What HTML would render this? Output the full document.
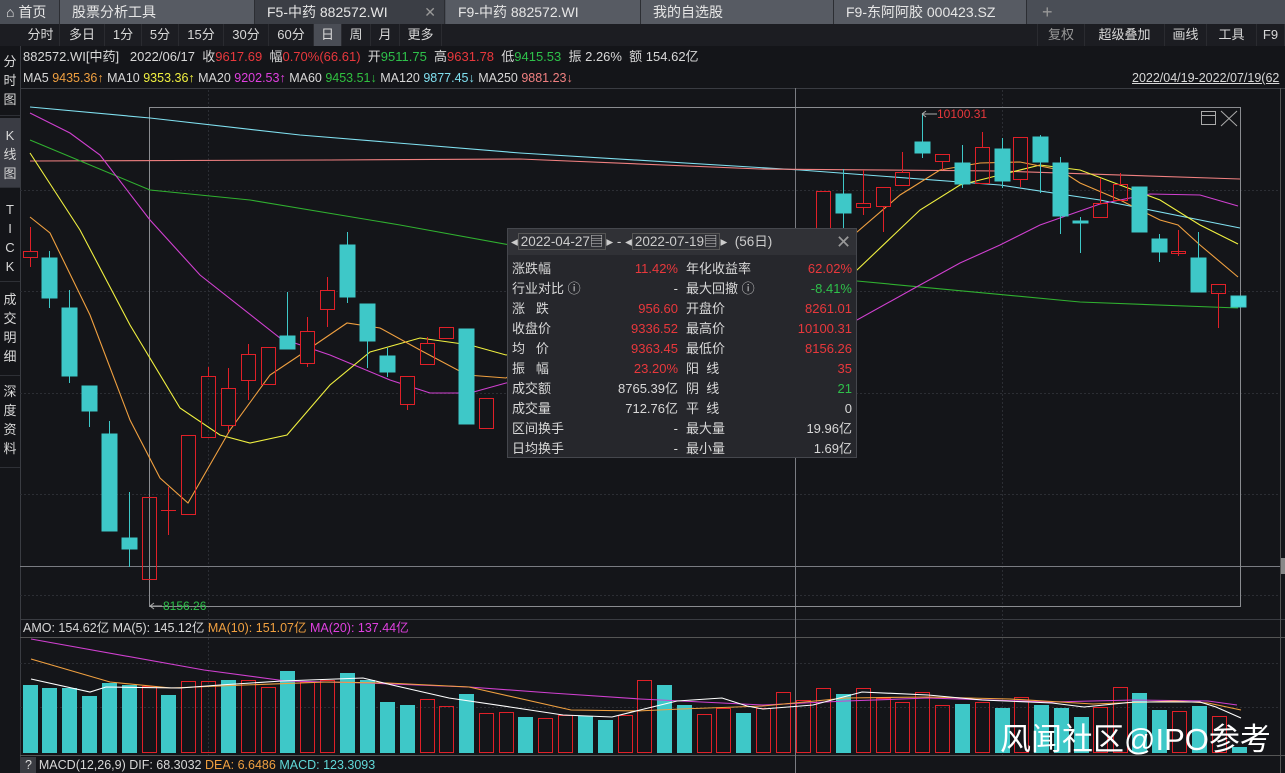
<!DOCTYPE html>
<html><head><meta charset="utf-8">
<style>
*{margin:0;padding:0;box-sizing:border-box}
body{width:1285px;height:773px;background:#141519;overflow:hidden;position:relative;font-family:"Liberation Sans","Noto Sans CJK SC",sans-serif;font-size:13px;color:#d8d8d8}
.abs{position:absolute;white-space:nowrap}
.tabs{position:absolute;left:0;top:0;width:1285px;height:24px;background:#4a4e56}
.tab{position:absolute;top:0;height:24px;line-height:24px;font-size:14px;color:#e6e6e6;padding-left:12px;border-right:1px solid #2c2e33}
.row2{position:absolute;left:0;top:24px;width:1285px;height:22px;background:#1c1d22}
.b{position:absolute;top:24px;height:22px;line-height:22px;font-size:13px;color:#d8d8d8;text-align:center;border-right:1px solid #2a2b30}
.side{position:absolute;left:0;width:20px;font-size:13px;color:#d8d8d8;text-align:center;line-height:19px;border-bottom:1px solid #2e3036}
.r{color:#e8383c}.g{color:#2ec04a}.pop{position:absolute;left:507px;top:228px;width:350px;height:230px;background:#26272c;border:1px solid #45474d}
.pr{position:absolute;height:20px;line-height:20px;font-size:13px}
</style></head><body>
<div class="tabs">
<div class="tab" style="left:0;width:60px;background:#4a4e56;padding-left:6px">⌂ 首页</div>
<div class="tab" style="left:60px;width:195px;background:#575b63">股票分析工具</div>
<div class="tab" style="left:255px;width:190px;background:#3b3e45">F5-中药 882572.WI<span style="position:absolute;right:8px;color:#999">✕</span></div>
<div class="tab" style="left:446px;width:195px;background:#575b63">F9-中药 882572.WI</div>
<div class="tab" style="left:641px;width:193px;background:#575b63">我的自选股</div>
<div class="tab" style="left:834px;width:193px;background:#575b63">F9-东阿阿胶 000423.SZ</div>
<div class="tab" style="left:1030px;width:30px;color:#999;border:none;font-size:18px">+</div>
</div>
<div class="row2"></div>
<div class="b" style="left:22px;width:38px">分时</div><div class="b" style="left:60px;width:45px">多日</div><div class="b" style="left:105px;width:37px">1分</div><div class="b" style="left:142px;width:37px">5分</div><div class="b" style="left:179px;width:45px">15分</div><div class="b" style="left:224px;width:45px">30分</div><div class="b" style="left:269px;width:45px">60分</div><div class="b" style="left:314px;width:28px;background:#4a4d55">日</div><div class="b" style="left:342px;width:29px">周</div><div class="b" style="left:371px;width:29px">月</div><div class="b" style="left:400px;width:42px">更多</div>
<div class="b" style="left:1037px;width:48px;color:#999;border-left:1px solid #2a2b30">复权</div><div class="b" style="left:1085px;width:80px">超级叠加</div><div class="b" style="left:1165px;width:42px">画线</div><div class="b" style="left:1207px;width:50px">工具</div><div class="b" style="left:1257px;width:28px">F9</div>
<div class="side" style="top:46px;height:70px;padding-top:6px">分<br>时<br>图</div>
<div class="side" style="top:118px;height:70px;padding-top:8px;background:#3a3c44">K<br>线<br>图</div>
<div class="side" style="top:192px;height:90px;padding-top:8px">T<br>I<br>C<br>K</div>
<div class="side" style="top:284px;height:92px;padding-top:6px">成<br>交<br>明<br>细</div>
<div class="side" style="top:376px;height:92px;padding-top:6px">深<br>度<br>资<br>料</div>
<div class="abs" style="left:23px;top:48px;line-height:18px">882572.WI[中药]&nbsp;&nbsp; 2022/06/17&nbsp; 收<span class="r">9617.69</span>&nbsp; 幅<span class="r">0.70%(66.61)</span>&nbsp; 开<span class="g">9511.75</span>&nbsp; 高<span class="r">9631.78</span>&nbsp; 低<span class="g">9415.53</span>&nbsp; 振 2.26%&nbsp; 额 154.62亿</div>
<div class="abs" style="left:23px;top:69px;line-height:18px;font-size:12.5px">MA5 <span style="color:#f0a040">9435.36↑</span> MA10 <span style="color:#f0f040">9353.36↑</span> MA20 <span style="color:#e040e0">9202.53↑</span> MA60 <span style="color:#30c040">9453.51↓</span> MA120 <span style="color:#80e0f0">9877.45↓</span> MA250 <span style="color:#f08080">9881.23↓</span></div>
<div class="abs" style="left:1132px;top:69px;line-height:18px;font-size:12.5px;text-decoration:underline">2022/04/19-2022/07/19(62</div>
<svg class="abs" style="left:0;top:0" width="1285" height="773">
<g stroke="#3a3c42" stroke-width="1">
<line x1="20" y1="88.5" x2="1285" y2="88.5"/><line x1="20.5" y1="46" x2="20.5" y2="773"/>
<line x1="20" y1="619.5" x2="1285" y2="619.5"/><line x1="20" y1="637.5" x2="1285" y2="637.5" stroke="#555"/>
<line x1="20" y1="755.5" x2="1285" y2="755.5" stroke="#555"/>
<line x1="1280.5" y1="88" x2="1280.5" y2="773" stroke="#555"/>
</g>
<g stroke="#2c2e34" stroke-dasharray="2,2">
<line x1="20" y1="190.5" x2="1280" y2="190.5"/><line x1="20" y1="291.5" x2="1280" y2="291.5"/><line x1="20" y1="393.5" x2="1280" y2="393.5"/><line x1="20" y1="494.5" x2="1280" y2="494.5"/><line x1="20" y1="595.5" x2="1280" y2="595.5"/>
<line x1="208.5" y1="90" x2="208.5" y2="755"/><line x1="1002.5" y1="90" x2="1002.5" y2="755"/>
<line x1="20" y1="663.5" x2="1280" y2="663.5"/><line x1="20" y1="707.5" x2="1280" y2="707.5"/>
</g>
<g stroke="#7a7c82"><line x1="795.5" y1="88" x2="795.5" y2="773"/><line x1="20" y1="566.5" x2="1280" y2="566.5"/></g>
<rect x="149.5" y="107.5" width="1091" height="499" fill="none" stroke="#8a8c90"/>
<rect x="1201.5" y="111.5" width="14" height="13" fill="none" stroke="#aaa"/><line x1="1202" y1="115.5" x2="1215" y2="115.5" stroke="#aaa"/>
<path d="M1221 111L1237 126M1237 111L1221 126" stroke="#aaa"/>
<rect x="1281" y="558" width="4" height="16" fill="#888"/>
<g fill="none" stroke-width="1.1">
<polyline stroke="#80e0f0" points="30,107 150,118 300,135 520,153 800,170 1000,185 1100,200 1240,228"/>
<polyline stroke="#f08080" points="30,161 330,160 520,159 760,169 1000,171 1240,179"/>
<polyline stroke="#30b030" points="30,140 150,190 250,200 400,225 510,245 857,281 1080,302 1238,308"/>
<polyline stroke="#d040d0" points="30,113 70,133 100,155 150,220 200,275 280,338 330,355 390,380 430,393 470,393 506,383 600,370 700,350 800,330 857,320 920,285 960,263 1000,245 1040,225 1100,204 1150,194 1200,195 1238,206"/>
<polyline stroke="#f0f040" points="30,153 80,230 130,325 180,408 220,435 250,443 287,435 330,385 370,352 420,338 470,345 506,355 600,340 700,310 800,285 857,270 920,210 960,185 1000,175 1040,165 1080,170 1120,185 1160,200 1200,225 1238,244"/>
<polyline stroke="#f0a040" points="30,217 50,233 90,315 130,420 160,478 188,503 230,430 270,375 300,355 347,323 380,328 420,350 467,375 506,378 600,320 700,280 800,250 857,232 900,195 940,170 980,163 1020,162 1060,170 1080,183 1120,200 1160,220 1178,225 1200,245 1238,277"/>
</g>
<g stroke="#3ec8c8" fill="#3ec8c8">
<line x1="49.5" y1="251" x2="49.5" y2="308"/><rect x="42" y="258" width="15" height="40"/>
<line x1="69.5" y1="290" x2="69.5" y2="383"/><rect x="62" y="308" width="15" height="68"/>
<line x1="89.5" y1="386" x2="89.5" y2="427"/><rect x="82" y="386" width="15" height="25"/>
<line x1="109.5" y1="421" x2="109.5" y2="531"/><rect x="102" y="434" width="15" height="97"/>
<line x1="129.5" y1="492" x2="129.5" y2="567"/><rect x="122" y="538" width="15" height="11"/>
<line x1="287.5" y1="292" x2="287.5" y2="349"/><rect x="280" y="336" width="15" height="13"/>
<line x1="347.5" y1="232" x2="347.5" y2="303"/><rect x="340" y="245" width="15" height="52"/>
<line x1="367.5" y1="304" x2="367.5" y2="368"/><rect x="360" y="304" width="15" height="37"/>
<line x1="387.5" y1="348" x2="387.5" y2="377"/><rect x="380" y="356" width="15" height="16"/>
<rect x="459" y="329" width="15" height="95"/>
<line x1="843.5" y1="169" x2="843.5" y2="228"/><rect x="836" y="194" width="15" height="19"/>
<line x1="922.5" y1="113" x2="922.5" y2="158"/><rect x="915" y="142" width="15" height="11"/>
<line x1="962.5" y1="145" x2="962.5" y2="188"/><rect x="955" y="163" width="15" height="21"/>
<line x1="1002.5" y1="138" x2="1002.5" y2="188"/><rect x="995" y="149" width="15" height="32"/>
<line x1="1040.5" y1="135" x2="1040.5" y2="193"/><rect x="1033" y="137" width="15" height="25"/>
<line x1="1060.5" y1="157" x2="1060.5" y2="234"/><rect x="1053" y="163" width="15" height="53"/>
<line x1="1080.5" y1="217" x2="1080.5" y2="253"/><rect x="1073" y="221" width="15" height="2"/>
<rect x="1132" y="187" width="15" height="45"/>
<line x1="1159.5" y1="234" x2="1159.5" y2="262"/><rect x="1152" y="239" width="15" height="13"/>
<line x1="1198.5" y1="232" x2="1198.5" y2="292"/><rect x="1191" y="258" width="15" height="34"/>
<rect x="1231" y="296" width="15" height="11" fill="#48d8d8"/>
</g>
<g stroke="#e02028" fill="none">
<line x1="30.5" y1="227" x2="30.5" y2="267"/><rect x="23.5" y="251.5" width="14" height="6" fill="#141519"/>
<rect x="142.5" y="497.5" width="14" height="82"/>
<line x1="168.5" y1="487" x2="168.5" y2="535"/><line x1="161" y1="510.5" x2="176" y2="510.5"/>
<rect x="181.5" y="435.5" width="14" height="79"/>
<line x1="208.5" y1="367" x2="208.5" y2="376"/><rect x="201.5" y="376.5" width="14" height="61"/>
<line x1="228.5" y1="368" x2="228.5" y2="432"/><rect x="221.5" y="388.5" width="14" height="37" fill="#141519"/>
<line x1="248.5" y1="344" x2="248.5" y2="400"/><rect x="241.5" y="354.5" width="14" height="26" fill="#141519"/>
<rect x="261.5" y="347.5" width="14" height="37"/>
<line x1="307.5" y1="317" x2="307.5" y2="367"/><rect x="300.5" y="331.5" width="14" height="32" fill="#141519"/>
<line x1="327.5" y1="277" x2="327.5" y2="327"/><rect x="320.5" y="290.5" width="14" height="19" fill="#141519"/>
<line x1="407.5" y1="376" x2="407.5" y2="410"/><rect x="400.5" y="376.5" width="14" height="28" fill="#141519"/>
<line x1="427.5" y1="337" x2="427.5" y2="343"/><rect x="420.5" y="343.5" width="14" height="21"/>
<rect x="439.5" y="327.5" width="14" height="11"/>
<rect x="479.5" y="398.5" width="14" height="30"/>
<rect x="816.5" y="191.5" width="14" height="38"/>
<line x1="863.5" y1="170" x2="863.5" y2="215"/><rect x="856.5" y="203.5" width="14" height="4" fill="#141519"/>
<line x1="883.5" y1="187" x2="883.5" y2="232"/><rect x="876.5" y="187.5" width="14" height="19" fill="#141519"/>
<line x1="902.5" y1="152" x2="902.5" y2="172"/><rect x="895.5" y="172.5" width="14" height="13"/>
<line x1="942.5" y1="161" x2="942.5" y2="170"/><rect x="935.5" y="154.5" width="14" height="7"/>
<line x1="982.5" y1="132" x2="982.5" y2="147"/><rect x="975.5" y="147.5" width="14" height="36"/>
<line x1="1020.5" y1="179" x2="1020.5" y2="187"/><rect x="1013.5" y="137.5" width="14" height="42"/>
<line x1="1100.5" y1="178" x2="1100.5" y2="203"/><rect x="1093.5" y="203.5" width="14" height="14"/>
<line x1="1120.5" y1="173" x2="1120.5" y2="184"/><rect x="1113.5" y="184.5" width="14" height="16"/>
<line x1="1178.5" y1="230" x2="1178.5" y2="256"/><rect x="1171.5" y="251.5" width="14" height="2"/>
<line x1="1218.5" y1="293" x2="1218.5" y2="328"/><rect x="1211.5" y="284.5" width="14" height="9"/>
</g>
<path d="M150 606l4-3M150 606l4 3" stroke="#aaa"/><line x1="150" y1="606" x2="162" y2="606" stroke="#aaa"/>
<text x="163" y="610" fill="#2ec04a" font-size="12" font-family="Liberation Sans">8156.26</text>
<path d="M922 114l4-3M922 114l4 3M922 114H937" stroke="#aaa" fill="none"/>
<text x="937" y="118" fill="#e8383c" font-size="12" font-family="Liberation Sans">10100.31</text>
<g fill="#3ec8c8">
<rect x="23" y="685" width="15" height="68"/><rect x="42" y="688" width="15" height="65"/><rect x="62" y="688" width="15" height="65"/><rect x="82" y="696" width="15" height="57"/><rect x="102" y="683" width="15" height="70"/><rect x="122" y="685" width="15" height="68"/><rect x="161" y="695" width="15" height="58"/><rect x="221" y="680" width="15" height="73"/><rect x="280" y="671" width="15" height="82"/><rect x="340" y="673" width="15" height="80"/><rect x="360" y="680" width="15" height="73"/><rect x="380" y="702" width="15" height="51"/><rect x="400" y="705" width="15" height="48"/><rect x="459" y="694" width="15" height="59"/><rect x="518" y="717" width="15" height="36"/><rect x="578" y="716" width="15" height="37"/><rect x="598" y="720" width="15" height="33"/><rect x="657" y="685" width="15" height="68"/><rect x="677" y="705" width="15" height="48"/><rect x="736" y="713" width="15" height="40"/><rect x="836" y="694" width="15" height="59"/><rect x="955" y="704" width="15" height="49"/><rect x="995" y="708" width="15" height="45"/><rect x="1034" y="705" width="15" height="48"/><rect x="1054" y="708" width="15" height="45"/><rect x="1074" y="717" width="15" height="36"/><rect x="1132" y="693" width="15" height="60"/><rect x="1152" y="710" width="15" height="43"/><rect x="1192" y="706" width="15" height="47"/><rect x="1232" y="747" width="15" height="6"/>
</g>
<g fill="none" stroke="#e02028">
<rect x="142.5" y="686.5" width="14" height="66"/><rect x="181.5" y="681.5" width="14" height="71"/><rect x="201.5" y="681.5" width="14" height="71"/><rect x="241.5" y="680.5" width="14" height="72"/><rect x="261.5" y="687.5" width="14" height="65"/><rect x="300.5" y="682.5" width="14" height="70"/><rect x="320.5" y="680.5" width="14" height="72"/><rect x="420.5" y="699.5" width="14" height="53"/><rect x="439.5" y="706.5" width="14" height="46"/><rect x="479.5" y="713.5" width="14" height="39"/><rect x="499.5" y="712.5" width="14" height="40"/><rect x="538.5" y="718.5" width="14" height="34"/><rect x="558.5" y="715.5" width="14" height="37"/><rect x="618.5" y="715.5" width="14" height="37"/><rect x="637.5" y="680.5" width="14" height="72"/><rect x="697.5" y="714.5" width="14" height="38"/><rect x="716.5" y="708.5" width="14" height="44"/><rect x="756.5" y="708.5" width="14" height="44"/><rect x="776.5" y="692.5" width="14" height="60"/><rect x="796.5" y="700.5" width="14" height="52"/><rect x="816.5" y="688.5" width="14" height="64"/><rect x="856.5" y="688.5" width="14" height="64"/><rect x="876.5" y="698.5" width="14" height="54"/><rect x="895.5" y="702.5" width="14" height="50"/><rect x="915.5" y="692.5" width="14" height="60"/><rect x="935.5" y="705.5" width="14" height="47"/><rect x="975.5" y="702.5" width="14" height="50"/><rect x="1014.5" y="697.5" width="14" height="55"/><rect x="1093.5" y="707.5" width="14" height="45"/><rect x="1113.5" y="687.5" width="14" height="65"/><rect x="1172.5" y="711.5" width="14" height="41"/><rect x="1212.5" y="716.5" width="14" height="36"/>
</g>
<g fill="none" stroke-width="1.1">
<polyline stroke="#d040d0" points="31,639 204,670 286,681 367,683 469,687 551,693 640,699 763,705 846,701 928,698 1051,702 1134,700 1208,701 1237,705"/>
<polyline stroke="#f0a040" points="31,659 110,682 171,688 245,685 327,682 388,683 469,687 571,710 637,711 681,709 763,706 846,698 928,697 1010,699 1093,704 1175,701 1208,703 1241,710"/>
<polyline stroke="#ffffff" points="31,679 90,692 106,687 180,688 220,685 282,681 363,678 392,685 449,698 510,707 563,715 612,717 640,710 677,701 722,698 747,706 763,709 813,705 862,692 928,695 982,700 1052,703 1084,707 1134,702 1200,702 1216,707 1241,718"/>
</g>
<rect x="20" y="757" width="16" height="16" fill="#3a3c42"/>
</svg>
<div class="abs" style="left:23px;top:620px;line-height:17px;font-size:12.5px">AMO: 154.62亿 MA(5): 145.12亿 <span style="color:#f0a040">MA(10): 151.07亿</span> <span style="color:#e040e0">MA(20): 137.44亿</span></div>
<div class="abs" style="left:25px;top:757px;line-height:16px;font-size:12.5px">?&nbsp; MACD(12,26,9) DIF: 68.3032 <span style="color:#f0a040">DEA: 6.6486</span> <span style="color:#60d8d8">MACD: 123.3093</span></div>
<div class="pop">
<div style="position:absolute;left:0;top:0;width:348px;height:26px;background:#303136"></div>
<div class="abs" style="left:3px;top:4px;line-height:18px;font-size:13.5px;color:#ccc">◂<span style="border:1px solid #555;padding:0 2px">2022-04-27▤</span>▸ - ◂<span style="border:1px solid #555;padding:0 2px">2022-07-19▤</span>▸&nbsp; (56日)</div>
<div class="abs" style="left:328px;top:3px;font-size:18px;color:#999">✕</div>
<div class="pr" style="left:4px;top:30px;line-height:20px">涨跌幅<br>行业对比 ⓘ<br>涨&nbsp;&nbsp; 跌<br>收盘价<br>均&nbsp;&nbsp; 价<br>振&nbsp;&nbsp; 幅<br>成交额<br>成交量<br>区间换手<br>日均换手</div>
<div class="pr" style="right:178px;top:30px;text-align:right;line-height:20px"><span class="r">11.42%</span><br>-<br><span class="r">956.60</span><br><span class="r">9336.52</span><br><span class="r">9363.45</span><br><span class="r">23.20%</span><br>8765.39亿<br>712.76亿<br>-<br>-</div>
<div class="pr" style="left:178px;top:30px;line-height:20px">年化收益率<br>最大回撤 ⓘ<br>开盘价<br>最高价<br>最低价<br>阳&nbsp; 线<br>阴&nbsp; 线<br>平&nbsp; 线<br>最大量<br>最小量</div>
<div class="pr" style="right:4px;top:30px;text-align:right;line-height:20px"><span class="r">62.02%</span><br><span class="g">-8.41%</span><br><span class="r">8261.01</span><br><span class="r">10100.31</span><br><span class="r">8156.26</span><br><span class="r">35</span><br><span class="g">21</span><br>0<br>19.96亿<br>1.69亿</div>
</div>
<div class="abs" style="left:1000px;top:721px;font-size:31px;color:#fff;line-height:38px">风闻社区@IPO参考</div>
</body></html>
